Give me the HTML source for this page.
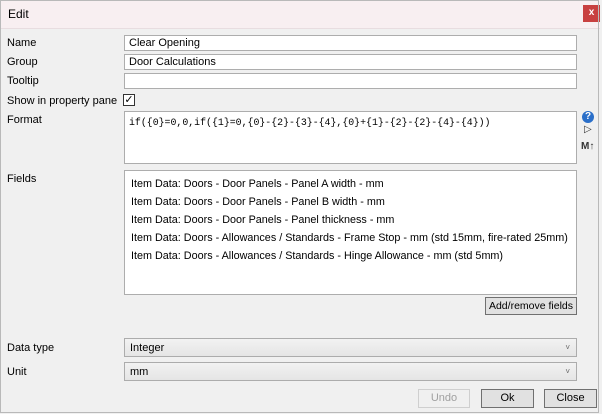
<!DOCTYPE html>
<html><head><style>
body{margin:0;width:602px;height:414px;background:#f0f0f0;font-family:"Liberation Sans",sans-serif;font-size:11px;color:#000;position:relative;overflow:hidden}
.a{position:absolute;white-space:nowrap}
.tb{left:0;top:0;width:600px;height:28px;background:#f8eff1;border-bottom:1px solid #e8dde0}
.win{left:0;top:0;width:599px;height:413px;border:1px solid #b9b9b9;box-sizing:border-box}
.inp{background:#fff;border:1px solid #adadad;box-sizing:border-box;padding-left:4px;line-height:15px}
.lbl{left:7px}
.btn{border:1px solid #adadad;background:#e1e1e1;box-sizing:border-box;text-align:center;line-height:17px}
.cb{background:linear-gradient(#f2f2f2,#e5e5e5);border:1px solid #acacac;box-sizing:border-box;padding-left:5px;line-height:18px}
.fl div{height:18px;line-height:18px;font-size:10.8px}
</style></head><body>
<div class="a tb"></div>
<div class="a" style="left:8px;top:7px;font-size:12px">Edit</div>
<div class="a" style="left:583px;top:5px;width:17px;height:17px;background:#c84040;color:#fff;text-align:center;line-height:16px;font-weight:bold;font-size:10px">x</div>
<div class="a win"></div>
<div class="a lbl" style="top:37px">Name</div>
<div class="a inp" style="left:124px;top:35px;width:453px;height:16px">Clear Opening</div>
<div class="a lbl" style="top:56px">Group</div>
<div class="a inp" style="left:124px;top:54px;width:453px;height:16px">Door Calculations</div>
<div class="a lbl" style="top:75px">Tooltip</div>
<div class="a inp" style="left:124px;top:73px;width:453px;height:16px"></div>
<div class="a lbl" style="top:95px">Show in property pane</div>
<div class="a" style="left:123px;top:94px;width:12px;height:12px;border:1px solid #333;box-sizing:border-box;background:#fff;font-size:11px;line-height:10px;text-align:center">✓</div>
<div class="a lbl" style="top:114px">Format</div>
<div class="a inp" style="left:124px;top:111px;width:453px;height:53px;font-family:'Liberation Mono',monospace;font-size:9.9px;padding-top:3px">if({0}=0,0,if({1}=0,{0}-{2}-{3}-{4},{0}+{1}-{2}-{2}-{4}-{4}))</div>
<div class="a" style="left:582px;top:111px;width:12px;height:12px;border-radius:50%;background:#2a6fc9;color:#fff;font-weight:bold;font-size:10px;text-align:center;line-height:12px">?</div>
<div class="a" style="left:584px;top:124px;font-size:10px;color:#333">▷</div>
<div class="a" style="left:581px;top:141px;font-size:10px;font-weight:bold;color:#333">M↑</div>
<div class="a lbl" style="top:173px">Fields</div>
<div class="a inp fl" style="left:124px;top:170px;width:453px;height:125px;padding-left:6px;padding-top:4px">
<div>Item Data: Doors - Door Panels - Panel A width - mm</div>
<div>Item Data: Doors - Door Panels - Panel B width - mm</div>
<div>Item Data: Doors - Door Panels - Panel thickness - mm</div>
<div>Item Data: Doors - Allowances / Standards - Frame Stop - mm (std 15mm, fire-rated 25mm)</div>
<div>Item Data: Doors - Allowances / Standards - Hinge Allowance - mm (std 5mm)</div>
</div>
<div class="a btn" style="left:485px;top:297px;width:92px;height:18px;border-color:#707070;font-size:10.5px">Add/remove fields</div>
<div class="a lbl" style="top:342px">Data type</div>
<div class="a cb" style="left:124px;top:338px;width:453px;height:19px">Integer<span style="position:absolute;right:6px;font-size:8px;color:#666">˅</span></div>
<div class="a lbl" style="top:366px">Unit</div>
<div class="a cb" style="left:124px;top:362px;width:453px;height:19px">mm<span style="position:absolute;right:6px;font-size:8px;color:#666">˅</span></div>
<div class="a btn" style="left:418px;top:389px;width:52px;height:19px;background:#f0f0f0;border-color:#cfcfcf;color:#a0a0a0">Undo</div>
<div class="a btn" style="left:481px;top:389px;width:53px;height:19px;border-color:#707070">Ok</div>
<div class="a btn" style="left:544px;top:389px;width:53px;height:19px;border-color:#707070">Close</div>
</body></html>
